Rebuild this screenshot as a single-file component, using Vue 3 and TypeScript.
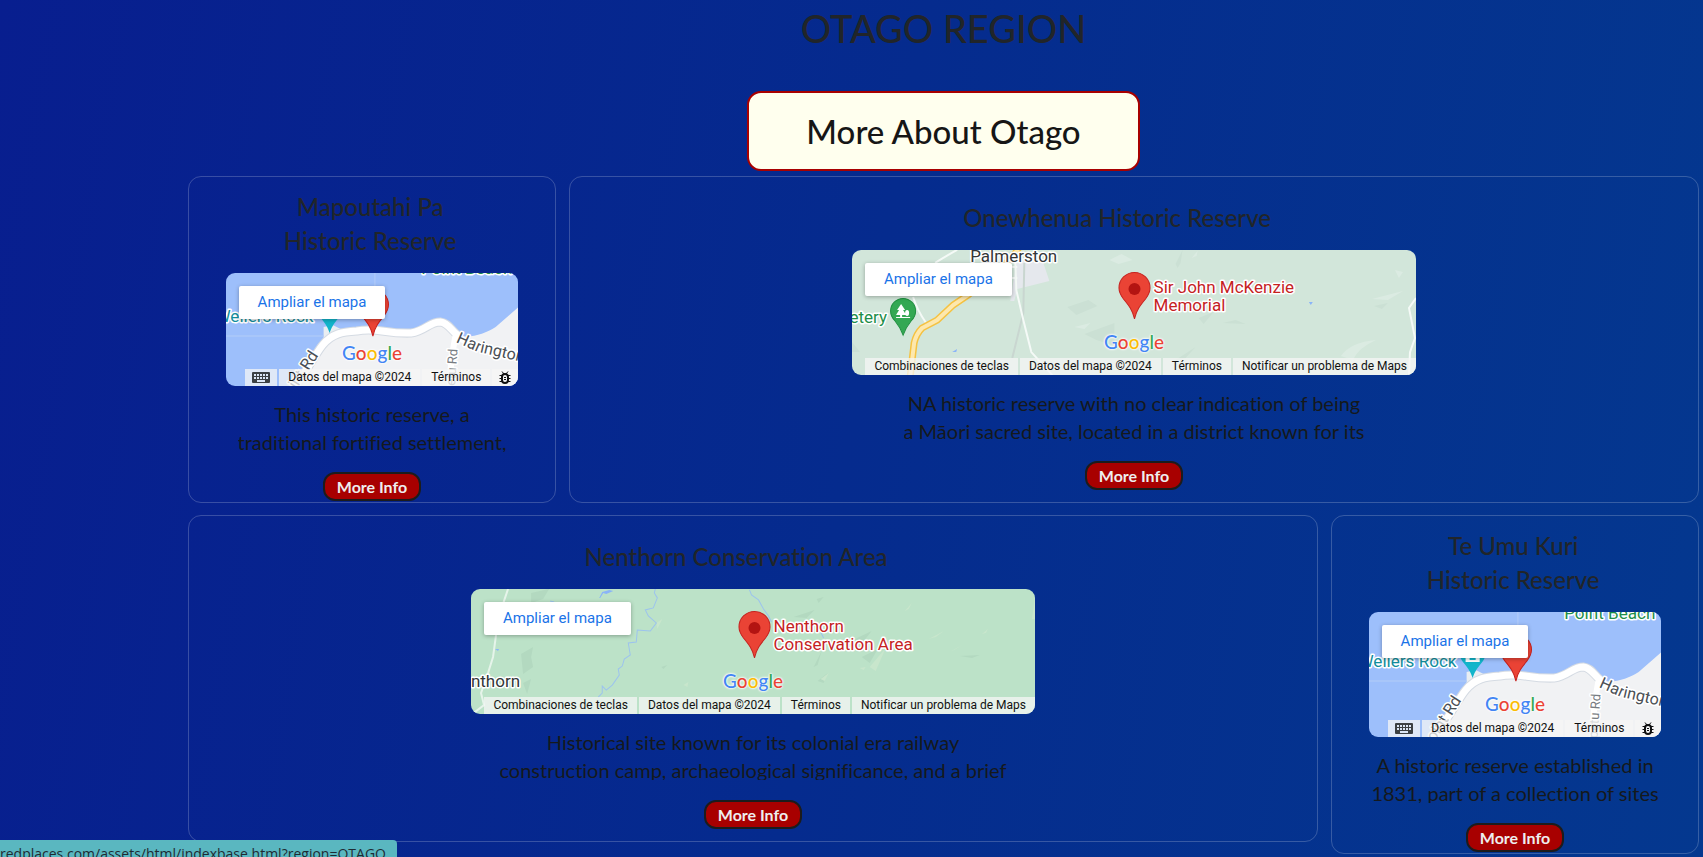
<script setup lang="ts">
type MapKind = 'peninsula' | 'palmerston' | 'nenthorn'

interface Place {
  id: string
  title: string[]
  text: string[]
  map: MapKind
  wide: boolean
  short: boolean
}

const places: Place[] = [
  {
    id: 'mapoutahi',
    title: ['Mapoutahi Pa', 'Historic Reserve'],
    text: ['This historic reserve, a', 'traditional fortified settlement,'],
    map: 'peninsula',
    wide: false,
    short: true,
  },
  {
    id: 'onewhenua',
    title: ['Onewhenua Historic Reserve'],
    text: ['NA historic reserve with no clear indication of being', 'a Māori sacred site, located in a district known for its'],
    map: 'palmerston',
    wide: true,
    short: false,
  },
  {
    id: 'nenthorn',
    title: ['Nenthorn Conservation Area'],
    text: ['Historical site known for its colonial era railway', 'construction camp, archaeological significance, and a brief'],
    map: 'nenthorn',
    wide: true,
    short: false,
  },
  {
    id: 'te-umu-kuri',
    title: ['Te Umu Kuri', 'Historic Reserve'],
    text: ['A historic reserve established in', '1831, part of a collection of sites'],
    map: 'peninsula',
    wide: false,
    short: false,
  },
]

const peninsulaRoad = 'M62 128 C78 108 88 88 96 78 C106 66 116 65 130 64 C150 60 158 67 184 66 C198 64 202 55 213 55 C222 56 225 66 233 70'
const pin = 'M0 0 C-2 -9 -6 -14 -11 -20 C-14 -24 -15.500 -27 -15.500 -31 A15.500 15.500 0 0 1 15.500 -31 C15.500 -27 14 -24 11 -20 C6 -14 2 -9 0 0 Z'
const smallPin = 'M0 0 C-2 -6 -4 -9 -8 -14 C-11 -17 -12.500 -20 -12.500 -24 A12.500 12.500 0 0 1 12.500 -24 C12.500 -20 11 -17 8 -14 C4 -9 2 -6 0 0 Z'
</script>

<template>
  <div class="page">
    <main class="region">
      <h1 class="region-title">OTAGO REGION</h1>
      <a class="about" href="#otago">More About Otago</a>

      <section class="places">
        <article
          v-for="place in places"
          :key="place.id"
          class="card"
          :class="{ wide: place.wide, short: place.short }"
        >
          <h2 class="card-title">
            <span v-for="line in place.title" :key="line">{{ line }}</span>
          </h2>

          <div class="map" :class="place.map">
            <svg v-if="place.map === 'peninsula'" class="map-art" viewBox="0 0 291 125" preserveAspectRatio="xMidYMid slice">
              <rect width="291" height="125" fill="#9dbffb" />
              <path d="M97 60 L106 58 L120 65 L97 82Z" fill="#e9eef2" />
              <path d="M60 125 C78 108 88 88 96 78 C106 66 116 65 130 64 C150 60 158 67 184 66 C198 64 202 55 213 55 C222 56 225 66 233 69 C246 71 258 66 268 60 L291 40 V125Z" fill="#f1f2f4" />
              <path d="M0 69 H97 M148 0 V62" stroke="#b3cdf8" stroke-width="1" fill="none" />
              <path :d="peninsulaRoad" fill="none" stroke="#d5dbe3" stroke-width="9" />
              <path d="M228 69 L224 92 L222 125" fill="none" stroke="#ffffff" stroke-width="6" />
              <path :d="peninsulaRoad" fill="none" stroke="#ffffff" stroke-width="7" />
              <path d="M228 68 Q252 86 291 88" fill="none" stroke="#ffffff" stroke-width="6" />
              <text class="label park" x="194" y="7">Point Beach</text>
              <text class="label teal" x="87" y="55" text-anchor="end">Wellers Rock</text>
              <g transform="translate(103 66)">
                <path :d="smallPin" fill="#12b5cb" />
                <path d="M-7 -22 H7 V-16 H-7Z" fill="#ffffff" />
                <path d="M-3 -22 V-18 H3 V-22" fill="#12b5cb" />
              </g>
              <g transform="translate(146 69)">
                <path :d="pin" fill="#ea4335" stroke="#c5221f" stroke-width="1" />
                <circle cx="0" cy="-30" r="6" fill="#b31412" />
              </g>
              <text class="label road" transform="translate(65 130) rotate(-57)">oint Rd</text>
              <text class="label road" transform="translate(228 75) rotate(24)">Har</text>
              <text class="label road" transform="translate(252 85) rotate(13)">ington</text>
              <text class="label minor" transform="translate(227 126) rotate(-86)">petu Rd</text>
            </svg>

            <svg v-else-if="place.map === 'palmerston'" class="map-art" viewBox="0 0 563 125" preserveAspectRatio="xMidYMid slice">
              <rect width="563" height="125" fill="#d2e6da" />
              <g fill="#cbe0d4">
                <path d="M215 57 L236 50 L245 56 L224 65Z M232 84 L262 73 L262 96 L244 90Z" />
                <path d="M323 14 L330 0 L328 13 L325 18Z M346 68 L361 62 L351 74Z M370 73 L383 70 L393 74Z M521 56 L535 53 L529 59Z" />
                <path d="M320 112 L343 97 L333 108Z M0 92 L8 102 L0 102Z" />
              </g>
              <g fill="#dbebe2">
                <path d="M257 10 L269 4 L280 10 L266 14Z M222 77 L238 73 L232 79Z M542 20 L550 22 L546 28Z M519 49 L550 41 L535 50Z" />
                <path d="M488 106 Q498 92 523 90 Q505 98 500 110Z M339 8 L345 1 L344 6Z" />
              </g>
              <path d="M165 7 L191 13 L197 31 L165 39 L162 51 L158 51Z" fill="#e5e8ed" />
              <path d="M172 13 L171 63 L160 108" fill="none" stroke="#c9d6d0" stroke-width="2" />
              <g fill="none" stroke="#f5faf7" stroke-width="2">
                <path d="M105 0 Q94 6 83 13 M61 47 Q65 60 74 73 M163 12 L164 40 L171 70 L179 102 L200 125 M158 17 H165 M158 28 H165" />
                <path d="M563 48 L556 58 L562 88 L557 102 L556 125" />
              </g>
              <path d="M58 127 L62 93 Q64 84 70 78 L85 70 L101 55 L116 45 L160 8 L167 -3" fill="none" stroke="#f5c242" stroke-width="7" />
              <path d="M58 127 L62 93 Q64 84 70 78 L85 70 L101 55 L116 45 L160 8 L167 -3" fill="none" stroke="#fde8ae" stroke-width="4" />
              <path d="M100 102 L105 99 L104 102Z M456 52 H460 L458 55Z" fill="#8ab4f8" />
              <text class="label town" x="118" y="12">Palmerston</text>
              <text class="label park" x="35" y="73" text-anchor="end">Cemetery</text>
              <g transform="translate(51 85)">
                <path :d="smallPin" fill="#34a853" stroke="#1e8e3e" stroke-width="1" />
                <path d="M-2 -31 L2 -25 H0 L3 -20 H-1 V-18 H7 V-17 H-7 V-18 H-3 V-20 H-7 L-4 -25 H-6Z M4 -25 A2 3 0 0 1 4 -19 A2 3 0 0 1 4 -25Z" fill="#ffffff" />
              </g>
              <g transform="translate(282 69)">
                <path :d="pin" fill="#ea4335" stroke="#c5221f" stroke-width="1" />
                <circle cx="0" cy="-30" r="6" fill="#b31412" />
              </g>
              <text class="label place" x="301" y="43">Sir John McKenzie</text>
              <text class="label place" x="301" y="61">Memorial</text>
            </svg>

            <svg v-else class="map-art" viewBox="0 0 563 125" preserveAspectRatio="xMidYMid slice">
              <rect width="563" height="125" fill="#bce2c8" />
              <g fill="#b3d9c0">
                <path d="M60 4 L78 0 L72 10 L60 14Z M50 65 L62 58 L60 68 L62 78 L52 85Z M52 94 L60 90 L56 105Z" />
                <path d="M345 10 L352 8 L347 14Z M322 28 L343 21 L335 29Z M342 78 L350 62 L346 76Z M375 54 L400 42 L392 52Z M390 68 L406 60 L398 74Z M488 67 L508 66 L500 69Z M190 78 L196 76 L192 80Z M346 92 L356 84 L352 94Z" />
              </g>
              <g fill="#c8e6cc">
                <path d="M433 22 L440 14 L437 20Z M457 50 L472 42 L464 48Z M478 63 L490 56 L484 60Z M398 78 L414 59 L404 82Z M388 79 L394 78 L392 81Z M212 96 L217 93 L216 98Z M185 34 L191 30 L186 40Z M510 45 L516 40 L514 44Z M349 90 L357 84 L353 92Z" />
                <path d="M563 8 L560 30 L563 30Z" />
              </g>
              <g fill="none" stroke="#e6f4ea" stroke-width="2">
                <path d="M37 0 Q28 25 25 46 L22 68 L17 84 L10 104 L13 116 L0 126" />
              </g>
              <g fill="none" stroke="#9cc3ee" stroke-width="1">
                <path d="M184 0 L183 4 L186 9 L182 19 L174 21 L177 27 L185 34 L179 42 L166 41 L165 53 L157 54 L159 66 L153 70 L151 77 L147 80 L148 86 L141 96 L135 101 L131 97 L131 104 L127 108" />
                <path d="M278 1 L280 6 L287 11 L292 20 L297 27 L300 33 M349 43 L352 49 M79 12 L83 13" />
              </g>
              <path d="M128 9 L131 3 L138 1 L142 2 L135 5 L132 4 L129 9Z M24 60 H28 L27 62Z" fill="#8ab4f8" />
              <text class="label town" x="49" y="98" text-anchor="end">Nenthorn</text>
              <g transform="translate(283 69)">
                <path :d="pin" fill="#ea4335" stroke="#c5221f" stroke-width="1" />
                <circle cx="0" cy="-30" r="6" fill="#b31412" />
              </g>
              <text class="label place" x="302" y="43">Nenthorn</text>
              <text class="label place" x="302" y="61">Conservation Area</text>
            </svg>

            <a class="enlarge" href="#map">Ampliar el mapa</a>

            <div class="google" aria-label="Google">
              <span class="b">G</span><span class="r">o</span><span class="y">o</span><span class="b">g</span><span class="g">l</span><span class="r">e</span>
            </div>

            <div class="credits">
              <template v-if="place.wide">
                <button class="credit" type="button">Combinaciones de teclas</button>
                <span class="credit">Datos del mapa ©2024</span>
                <a class="credit" href="#terms">Términos</a>
                <a class="credit" href="#report">Notificar un problema de Maps</a>
              </template>
              <template v-else>
                <button class="credit icon" type="button" aria-label="Combinaciones de teclas">
                  <svg width="18" height="11" viewBox="0 0 18 11">
                    <rect width="18" height="11" rx="1" fill="#3c4043" />
                    <path d="M2 2h2v2h-2z M5 2h2v2h-2z M8 2h2v2h-2z M11 2h2v2h-2z M14 2h2v2h-2z M2 5h2v2h-2z M5 5h2v2h-2z M8 5h2v2h-2z M11 5h2v2h-2z M14 5h2v2h-2z M5 8h8v2h-8z" fill="#dce6f5" />
                  </svg>
                </button>
                <span class="credit">Datos del mapa ©2024</span>
                <a class="credit" href="#terms">Términos</a>
                <a class="credit icon" href="#report" aria-label="Notificar un problema de Maps">
                  <svg width="12" height="13" viewBox="0 0 12 13" fill="none" stroke="#111111">
                    <rect x="3" y="3" width="6" height="9" rx="3" stroke-width="2" />
                    <path d="M3 0.500 L5 3 M9 0.500 L7 3 M0.500 4.500 H3 M9 4.500 H11.500 M0.500 7.500 H3 M9 7.500 H11.500 M0.500 10.500 H3 M9 10.500 H11.500" stroke-width="1" />
                    <path d="M5 6.500 H7 M5 8.500 H7" stroke-width="1" />
                  </svg>
                </a>
              </template>
            </div>
          </div>

          <p class="card-text">
            <span v-for="line in place.text" :key="line">{{ line }}</span>
          </p>
          <button class="more" type="button">More Info</button>
        </article>
      </section>
    </main>

    <div class="status">redplaces.com/assets/html/indexbase.html?region=OTAGO</div>
  </div>
</template>

<style>
body {
  margin: 0;
  background: #05298e;
}
</style>

<style scoped>
.page {
  min-height: 100vh;
  box-sizing: border-box;
  padding: 0 4px 3px 188px;
  background: linear-gradient(100deg, #081e8f 0%, #052b8e 50%, #04388f 100%);
  font-family: Lato, "Liberation Sans", sans-serif;
  font-variant-ligatures: none;
  color: #212529;
}

.region {
  display: flex;
  flex-direction: column;
  align-items: center;
}

.region-title {
  margin: 4px 0 39px;
  font-size: 38px;
  line-height: 48px;
  font-weight: 500;
}

.about {
  box-sizing: border-box;
  min-width: 393px;
  padding: 18px 40px;
  border: 2px solid #a80000;
  border-radius: 14px;
  background: #ffffee;
  color: #161616;
  font-size: 33px;
  line-height: 40px;
  font-weight: 500;
  text-align: center;
  text-decoration: none;
}

.places {
  display: grid;
  grid-template-columns: repeat(4, minmax(0, 1fr));
  align-items: start;
  gap: 12px 13px;
  width: 100%;
  margin-top: 5px;
}

.card {
  display: flex;
  flex-direction: column;
  align-items: center;
  justify-content: center;
  box-sizing: border-box;
  min-height: 327px;
  padding: 13px 0 1px;
  border: 1px solid rgba(255, 255, 255, 0.2);
  border-radius: 13px;
  text-align: center;
}

.card.wide {
  grid-column: span 3;
}

.card-title {
  margin: 0 1% 15px 0;
  font-size: 24px;
  line-height: 34px;
  font-weight: 500;
}

.card.wide .card-title {
  margin-right: 3%;
}

.card-title span,
.card-text span {
  display: block;
  white-space: nowrap;
}

.map {
  position: relative;
  width: 80%;
  height: 125px;
  overflow: hidden;
  border-radius: 9px;
  font-family: Roboto, "Liberation Sans", sans-serif;
}

.card.short .map {
  height: 113px;
}

.card.wide .map {
  width: 50%;
}

.map-art {
  display: block;
  width: 100%;
  height: 100%;
}

.label {
  font-family: Roboto, "Liberation Sans", sans-serif;
  font-size: 17px;
  stroke: #ffffff;
  stroke-width: 3px;
  stroke-linejoin: round;
  paint-order: stroke;
}

.label.place {
  fill: #c5221f;
}

.label.park {
  fill: #1e8e4a;
}

.label.teal {
  fill: #128e9e;
}

.label.town {
  fill: #333638;
}

.label.road {
  fill: #4a4f55;
  font-size: 16px;
}

.label.minor {
  fill: #777c82;
  font-size: 13px;
}

.enlarge {
  position: absolute;
  top: 13px;
  left: 13px;
  padding: 0 19px;
  border-radius: 2px;
  background: #ffffff;
  box-shadow: 0 1px 4px rgba(0, 0, 0, 0.3);
  color: #1a73e8;
  font-size: 15px;
  line-height: 33px;
  text-decoration: none;
  white-space: nowrap;
}

.google {
  position: absolute;
  right: 0;
  bottom: 21px;
  left: 0;
  display: flex;
  justify-content: center;
  font-family: Lato, "Liberation Sans", sans-serif;
  font-size: 19px;
  line-height: 24px;
  font-weight: 500;
  text-shadow: 0 0 2px #ffffff, 0 0 2px #ffffff, 0 0 3px #ffffff;
}

.google .b {
  color: #4285f4;
}

.google .r {
  color: #ea4335;
}

.google .y {
  color: #fbbc04;
}

.google .g {
  color: #34a853;
}

.credits {
  position: absolute;
  right: 0;
  bottom: 0;
  display: flex;
  gap: 2px;
}

.credit {
  box-sizing: border-box;
  height: 17px;
  margin: 0;
  padding: 0 9px;
  border: 0;
  background: rgba(245, 245, 245, 0.75);
  color: #111111;
  font-family: Roboto, "Liberation Sans", sans-serif;
  font-size: 12px;
  line-height: 17px;
  text-decoration: none;
  white-space: nowrap;
}

.credit.icon {
  display: flex;
  align-items: center;
  padding: 0 7px;
}

.card-text {
  height: 52px;
  margin: 14px 0 20px;
  overflow: hidden;
  color: #15191c;
  font-size: 20px;
  line-height: 28px;
}

.more {
  box-sizing: border-box;
  height: 29px;
  padding: 0 12px;
  border: 2px solid #1c1c1c;
  border-radius: 12px;
  background: #a80000;
  color: #eeeeee;
  font-family: Lato, "Liberation Sans", sans-serif;
  font-size: 16px;
  line-height: 24px;
  font-weight: 700;
}

.status {
  position: fixed;
  bottom: 0;
  left: 0;
  box-sizing: border-box;
  height: 17px;
  padding: 2px 11px 0 0;
  overflow: hidden;
  border-top-right-radius: 4px;
  background: #5ab7c0;
  color: #1f2b33;
  font-family: "Open Sans", "Noto Sans", sans-serif;
  font-size: 14px;
  line-height: 23px;
  white-space: nowrap;
}
</style>
